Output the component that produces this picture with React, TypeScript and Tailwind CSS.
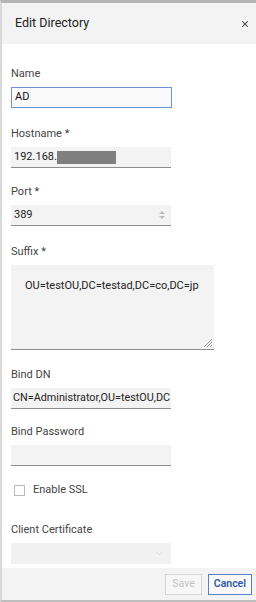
import { ChevronDown, X } from 'lucide-react';

const font = { fontFamily: 'Roboto, "Noto Sans", Arial, sans-serif' };

function Label({ children }: { children: React.ReactNode }) {
  return <div className="text-[11px] leading-[14px] text-[#444] mb-[6px]">{children}</div>;
}

export default function App() {
  return (
    <div
      className="w-[256px] h-[602px] flex flex-col bg-white border-t-[3px] border-t-[#b4b4b4] border-l-2 border-l-[#d8d8d8] border-b-2 border-b-[#bdbdbd] overflow-hidden"
      style={font}
    >
      {/* header */}
      <div className="h-[41px] shrink-0 bg-[#f3f3f3] flex items-center justify-between pl-[13px] pr-[6px]">
        <span className="text-[12.5px] text-[#222]">Edit Directory</span>
        <X className="w-[10px] h-[10px] text-[#333]" strokeWidth={2.5} />
      </div>

      {/* body */}
      <div className="flex-1 pl-[9px] pt-[23px]">
        <Label>Name</Label>
        <div className="w-[161px] h-[21px] border border-[#6f93d8] bg-[#fafafa] flex items-center px-[3px] text-[11px] text-[#111]">
          AD
        </div>

        <div className="mt-[19px]">
          <Label>Hostname *</Label>
          <div className="w-[160px] h-[21px] bg-[#f3f3f3] border-b border-[#8c8c8c] flex items-center px-[3px] text-[11px] text-[#222]">
            192.168.
            <span className="inline-block w-[59px] h-[13px] bg-[#7f7f7f]" />
          </div>
        </div>

        <div className="mt-[17px]">
          <Label>Port *</Label>
          <div className="w-[160px] h-[21px] bg-[#f3f3f3] border-b border-[#8c8c8c] flex items-center justify-between px-[3px] text-[11px] text-[#222]">
            389
            <div className="flex flex-col items-center gap-[2px] mr-[3px]">
              <span className="block w-0 h-0 border-x-[3px] border-x-transparent border-b-[3px] border-b-[#bbb]" />
              <span className="block w-0 h-0 border-x-[3px] border-x-transparent border-t-[3px] border-t-[#bbb]" />
            </div>
          </div>
        </div>

        <div className="mt-[19px]">
          <Label>Suffix *</Label>
          <div className="relative w-[203px] h-[85px] bg-[#f3f3f3] border-b border-[#8c8c8c] pl-[14px] pt-[13px] text-[11px] text-[#222]">
            OU=testOU,DC=testad,DC=co,DC=jp
            <svg className="absolute right-[1px] bottom-[1px]" width="10" height="10" viewBox="0 0 10 10">
              <line x1="9" y1="1" x2="1" y2="9" stroke="#888" strokeWidth="0.8" />
              <line x1="9" y1="4" x2="4" y2="9" stroke="#888" strokeWidth="0.8" />
              <line x1="9" y1="7" x2="7" y2="9" stroke="#888" strokeWidth="0.8" />
            </svg>
          </div>
        </div>

        <div className="mt-[18px]">
          <Label>Bind DN</Label>
          <div className="w-[160px] h-[21px] bg-[#f3f3f3] border-b border-[#8c8c8c] flex items-center pl-[2px] text-[10.8px] text-[#222] overflow-hidden whitespace-nowrap">
            CN=Administrator,OU=testOU,DC
          </div>
        </div>

        <div className="mt-[16px]">
          <Label>Bind Password</Label>
          <div className="w-[160px] h-[21px] bg-[#f3f3f3] border-b border-[#8c8c8c]" />
        </div>

        <div className="mt-[16px] flex items-center gap-[8px] pl-[3px]">
          <span className="w-[11px] h-[11px] border border-[#bbb] bg-white" />
          <span className="text-[11px] text-[#444]">Enable SSL</span>
        </div>

        <div className="mt-[24px]">
          <Label>Client Certificate</Label>
          <div className="w-[160px] h-[21px] bg-[#f1f1f1] flex items-center justify-end pr-[6px]">
            <ChevronDown className="w-[11px] h-[11px] text-[#c8c8c8]" strokeWidth={1.5} />
          </div>
        </div>
      </div>

      {/* footer */}
      <div className="h-[32px] shrink-0 bg-[#f3f3f3] flex items-center justify-end gap-[6px] pr-[4px]">
        <button className="h-[21px] px-[6px] border border-[#d4d4d4] bg-[#f7f7f7] text-[10.5px] text-[#c4c4c4]">
          Save
        </button>
        <button className="h-[21px] px-[5px] border border-[#5a7fc4] bg-[#f9f9f9] text-[10.5px] font-semibold text-[#2f5aa8]">
          Cancel
        </button>
      </div>
    </div>
  );
}
